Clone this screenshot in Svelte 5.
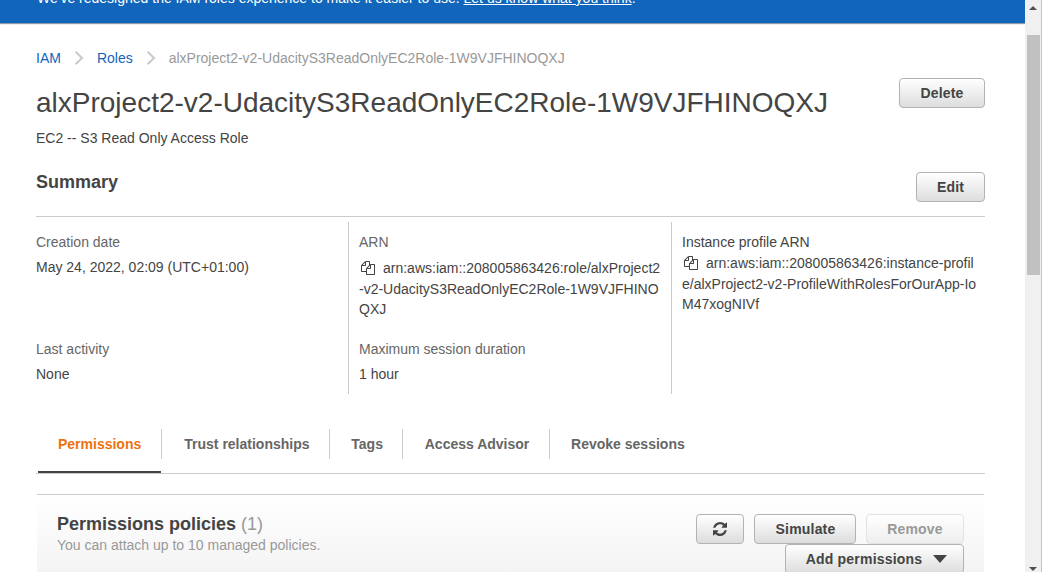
<script>
  const role = 'alxProject2-v2-UdacityS3ReadOnlyEC2Role-1W9VJFHINOQXJ';
  const tabs = ['Permissions', 'Trust relationships', 'Tags', 'Access Advisor', 'Revoke sessions'];
  const roleArn = ['arn:aws:iam::208005863426:role/alxProject2', '-v2-UdacityS3ReadOnlyEC2Role-1W9VJFHINO', 'QXJ'];
  const profileArn = ['arn:aws:iam::208005863426:instance-profil', 'e/alxProject2-v2-ProfileWithRolesForOurApp-Io', 'M47xogNIVf'];
</script>

{#snippet chevron()}
  <svg class="chevron" viewBox="0 0 10 14"><path d="M1.6 0.8 8 7 1.6 13.2" fill="none" stroke="#ccc" stroke-width="2.2" /></svg>
{/snippet}

{#snippet arn(lines)}
  <div class="arn">
    <div class="first">
      <svg class="copy" viewBox="0 0 1792 1792"><path fill="#444" d="M1696 384q40 0 68 28t28 68v1216q0 40-28 68t-68 28h-960q-40 0-68-28t-28-68v-288h-544q-40 0-68-28t-28-68v-672q0-40 20-88t48-76l408-408q28-28 76-48t88-20h416q40 0 68 28t28 68v328q68-40 128-40h416zm-544 213l-299 299h299v-299zm-640-384l-299 299h299v-299zm196 647l316-316v-416h-384v416q0 40-28 68t-68 28h-416v640h512v-256q0-40 20-88t48-76zm956 804v-1152h-384v416q0 40-28 68t-68 28h-416v640h896z" /></svg>
      <span>{lines[0]}</span>
    </div>
    <div>{lines[1]}</div>
    <div>{lines[2]}</div>
  </div>
{/snippet}

<div class="window">
  <div class="page">
    <div class="banner"><p>We've redesigned the IAM roles experience to make it easier to use. <a href="#feedback">Let us know what you think</a>.</p></div>
    <main>
      <nav class="crumbs">
        <a href="#iam">IAM</a>{@render chevron()}<a href="#roles">Roles</a>{@render chevron()}<span>{role}</span>
      </nav>
      <header class="title">
        <div>
          <h1>{role}</h1>
          <p>EC2 -- S3 Read Only Access Role</p>
        </div>
        <button class="delete">Delete</button>
      </header>
      <div class="summary-head">
        <h2>Summary</h2>
        <button class="edit">Edit</button>
      </div>
      <section class="summary">
        <div class="col">
          <div class="field top"><div class="label">Creation date</div><div class="value">May 24, 2022, 02:09 (UTC+01:00)</div></div>
          <div class="field"><div class="label">Last activity</div><div class="value">None</div></div>
        </div>
        <div class="col">
          <div class="field top"><div class="label">ARN</div>{@render arn(roleArn)}</div>
          <div class="field"><div class="label">Maximum session duration</div><div class="value">1 hour</div></div>
        </div>
        <div class="col profile">
          <div class="field"><div class="label">Instance profile ARN</div>{@render arn(profileArn)}</div>
        </div>
      </section>
      <div class="tabs">
        {#each tabs as tab, i}
          <div class="tab" class:active={i === 0}><span>{tab}</span></div>
        {/each}
      </div>
      <section class="panel">
        <div class="panel-text">
          <h2>Permissions policies <span>(1)</span></h2>
          <p>You can attach up to 10 managed policies.</p>
        </div>
        <div class="actions">
          <div class="row">
            <button class="refresh" aria-label="Refresh"><svg viewBox="128 128 1536 1536"><path fill="#444" d="M1639 1056q0 5-1 7-64 268-268 434.5t-478 166.5q-146 0-282.5-55t-243.5-157l-129 129q-19 19-45 19t-45-19-19-45v-448q0-26 19-45t45-19h448q26 0 45 19t19 45-19 45l-137 137q71 66 161 102t187 36q134 0 250-65t186-179q11-17 53-117 8-23 30-23h192q13 0 22.5 9.5t9.5 22.5zm25-800v448q0 26-19 45t-45 19h-448q-26 0-45-19t-19-45 19-45l138-138q-148-137-349-137-134 0-250 65t-186 179q-11 17-53 117-8 23-30 23h-199q-13 0-22.5-9.5t-9.5-22.5v-7q65-268 270-434.5t480-166.5q146 0 284 55.5t245 156.5l130-129q19-19 45-19t45 19 19 45z" /></svg></button>
            <button class="simulate">Simulate</button>
            <button class="remove" disabled>Remove</button>
          </div>
          <button class="add">Add permissions<svg viewBox="0 0 14 8"><path fill="#444" d="M0 0h14L7 8z" /></svg></button>
        </div>
      </section>
    </main>
  </div>
  <div class="scrollbar">
    <svg viewBox="0 0 8 4"><path fill="#505050" d="M0 4 4 0 8 4z" /></svg>
    <div class="thumb"></div>
    <svg class="down" viewBox="0 0 8 4"><path fill="#505050" d="M0 0 4 4 8 0z" /></svg>
  </div>
</div>

<style>
  :global(body) { margin: 0; background: #fff; overflow: hidden; }
  .window { display: flex; width: 1052px; height: 572px; overflow: hidden; font: 14px/20px "Liberation Sans", Arial, sans-serif; color: #444; }
  .page { width: 1025px; height: 572px; overflow: hidden; }
  h1, h2, p { margin: 0; }
  a { color: #1166bb; text-decoration: none; }
  .banner { box-sizing: border-box; height: 24px; overflow: hidden; background: #1166bb; border-bottom: 1px solid #8a9ba8; box-shadow: 0 1px 0 #eee; color: #fff; padding-left: 37px; }
  .banner p { margin-top: -12px; white-space: nowrap; }
  .banner a { color: #fff; text-decoration: underline; }
  main { padding: 24px 40px 0 36px; }
  .crumbs { display: flex; align-items: center; height: 20px; }
  .crumbs span { color: #999; }
  .chevron { width: 10px; height: 14px; margin: 0 13px; }
  .title { display: flex; justify-content: space-between; height: 84px; padding-top: 18px; }
  h1 { font-size: 28px; line-height: 34px; font-weight: 400; }
  .title p { padding-top: 8px; }
  button { box-sizing: border-box; height: 30px; padding: 0; flex: none; border: 1px solid #b3b3b3; border-radius: 4px; background: linear-gradient(#fff, #ddd); color: #444; font: bold 14px/20px "Liberation Sans", Arial, sans-serif; letter-spacing: 0.2px; }
  .delete { width: 86px; margin-top: -8px; }
  .summary-head { display: flex; justify-content: space-between; height: 46px; border-bottom: 1px solid #ccc; }
  h2 { font-size: 18px; line-height: 24px; }
  .edit { width: 69px; margin-top: 2px; }
  .summary { display: grid; grid-template-columns: 312px 323px 314px; height: 172px; margin-top: 5px; }
  .col { box-sizing: border-box; padding: 10px 0 0 10px; border-left: 1px solid #ccc; white-space: nowrap; }
  .col:first-child { padding-left: 0; border-left: 0; }
  .label { color: #666; }
  .profile .label { color: #444; }
  .top { height: 107px; }
  .value { margin-top: 5px; }
  .arn { padding-top: 6px; }
  .profile .arn { padding-top: 1px; }
  .first { display: flex; height: 21px; }
  .copy { width: 14px; height: 14px; margin: 3px 8px 0 2px; }
  .tabs { display: flex; height: 58px; margin-top: 21px; border-bottom: 1px solid #ccc; padding-left: 2px; }
  .tab { box-sizing: border-box; height: 58px; padding-top: 14px; font-weight: bold; color: #666; white-space: nowrap; }
  .tab span { display: block; height: 30px; line-height: 30px; padding: 0 19.3px 0 21.5px; border-right: 1px solid #ccc; }
  .tab:first-child span { padding: 0 20px; }
  .tab:nth-child(2) span { padding-left: 22px; }
  .tab:last-child span { border: 0; }
  .tab.active { color: #ec7211; position: relative; }
  .active::after { content: ""; position: absolute; left: 0; right: 1px; bottom: 0; height: 2px; background: #444; }
  .panel { display: flex; justify-content: space-between; box-sizing: border-box; height: 110px; margin: 20px 1px 0; padding: 0 20px; border-top: 1px solid #ccc; background: linear-gradient(#fff, #f4f4f4 77px); }
  .panel-text { padding-top: 17px; }
  .panel h2 span { font-weight: 400; color: #999; }
  .panel p { color: #999; margin-top: -1px; }
  .actions { display: flex; flex-direction: column; align-items: flex-end; padding-top: 19px; }
  .row { display: flex; gap: 10px; }
  .refresh { width: 48px; display: flex; align-items: center; justify-content: center; }
  .refresh svg { width: 14px; height: 14px; }
  .simulate { width: 102px; padding-left: 1px; }
  .remove { width: 98px; color: #999; border-color: #e2e2e2; background: linear-gradient(#fff, #eee); }
  .add { width: 179px; padding-left: 4px; }
  .add svg { width: 14px; height: 8px; margin-left: 11px; vertical-align: 1px; }
  .scrollbar { box-sizing: border-box; display: flex; flex-direction: column; align-items: center; width: 17px; height: 572px; padding: 6px 0 0; background: #f0f0f0; border-right: 1px solid #c4c4c4; }
  .scrollbar svg { width: 8px; height: 4px; flex: none; }
  .thumb { width: 13px; height: 240px; margin: 25px 0 auto 1px; background: #c1c1c1; flex: none; }
  .scrollbar .down { margin-bottom: 1px; }
</style>
